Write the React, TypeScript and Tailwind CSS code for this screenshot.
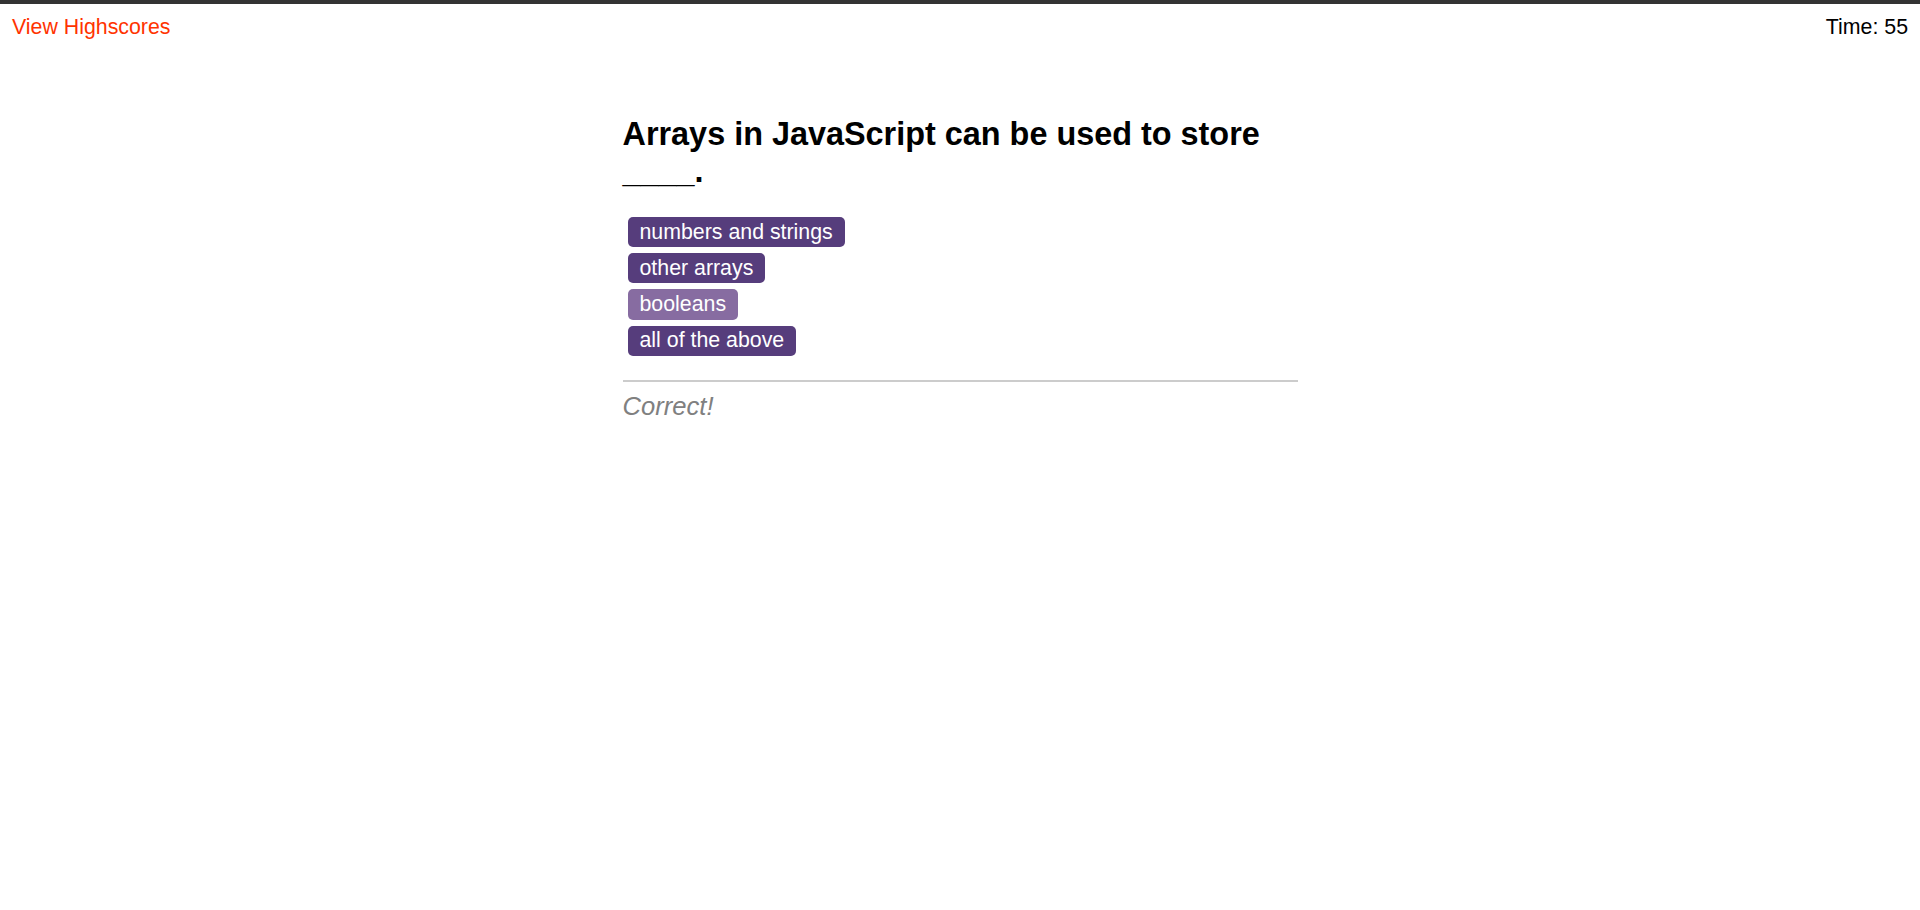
const choices = ["numbers and strings", "other arrays", "booleans", "all of the above"];

const App = () => {
  return (
    <div className="min-h-screen bg-white text-black" style={{ fontFamily: '"Liberation Sans", Arial, sans-serif' }}>
      <div className="h-[4px] bg-[#333333]" />
      <header className="flex justify-between px-[12px] pt-[11px] text-[21.33px] leading-[normal]">
        <a href="#" className="text-[#ff3300]">View Highscores</a>
        <span>Time: 55</span>
      </header>
      <main className="w-[675px] mx-auto mt-[76px]">
        <h1 className="text-[32.4px] font-bold leading-[normal]">Arrays in JavaScript can be used to store ____.</h1>
        <ol className="mt-[27px] ml-[5px] flex flex-col items-start gap-[6px]">
          {choices.map((c) => (
            <li key={c}>
              <button
                className={
                  "rounded-[5px] px-[12px] py-[2.6px] text-white text-[21.33px] leading-[normal] " +
                  (c === "booleans" ? "bg-[#876ca1]" : "bg-[#563d7c]")
                }
              >
                {c}
              </button>
            </li>
          ))}
        </ol>
        <hr className="mt-[24px] border-0 border-t-2 border-[#cccccc]" />
        <p className="mt-[10px] italic text-[25.6px] leading-[normal] text-[#808080]">Correct!</p>
      </main>
    </div>
  );
};

export default App;
